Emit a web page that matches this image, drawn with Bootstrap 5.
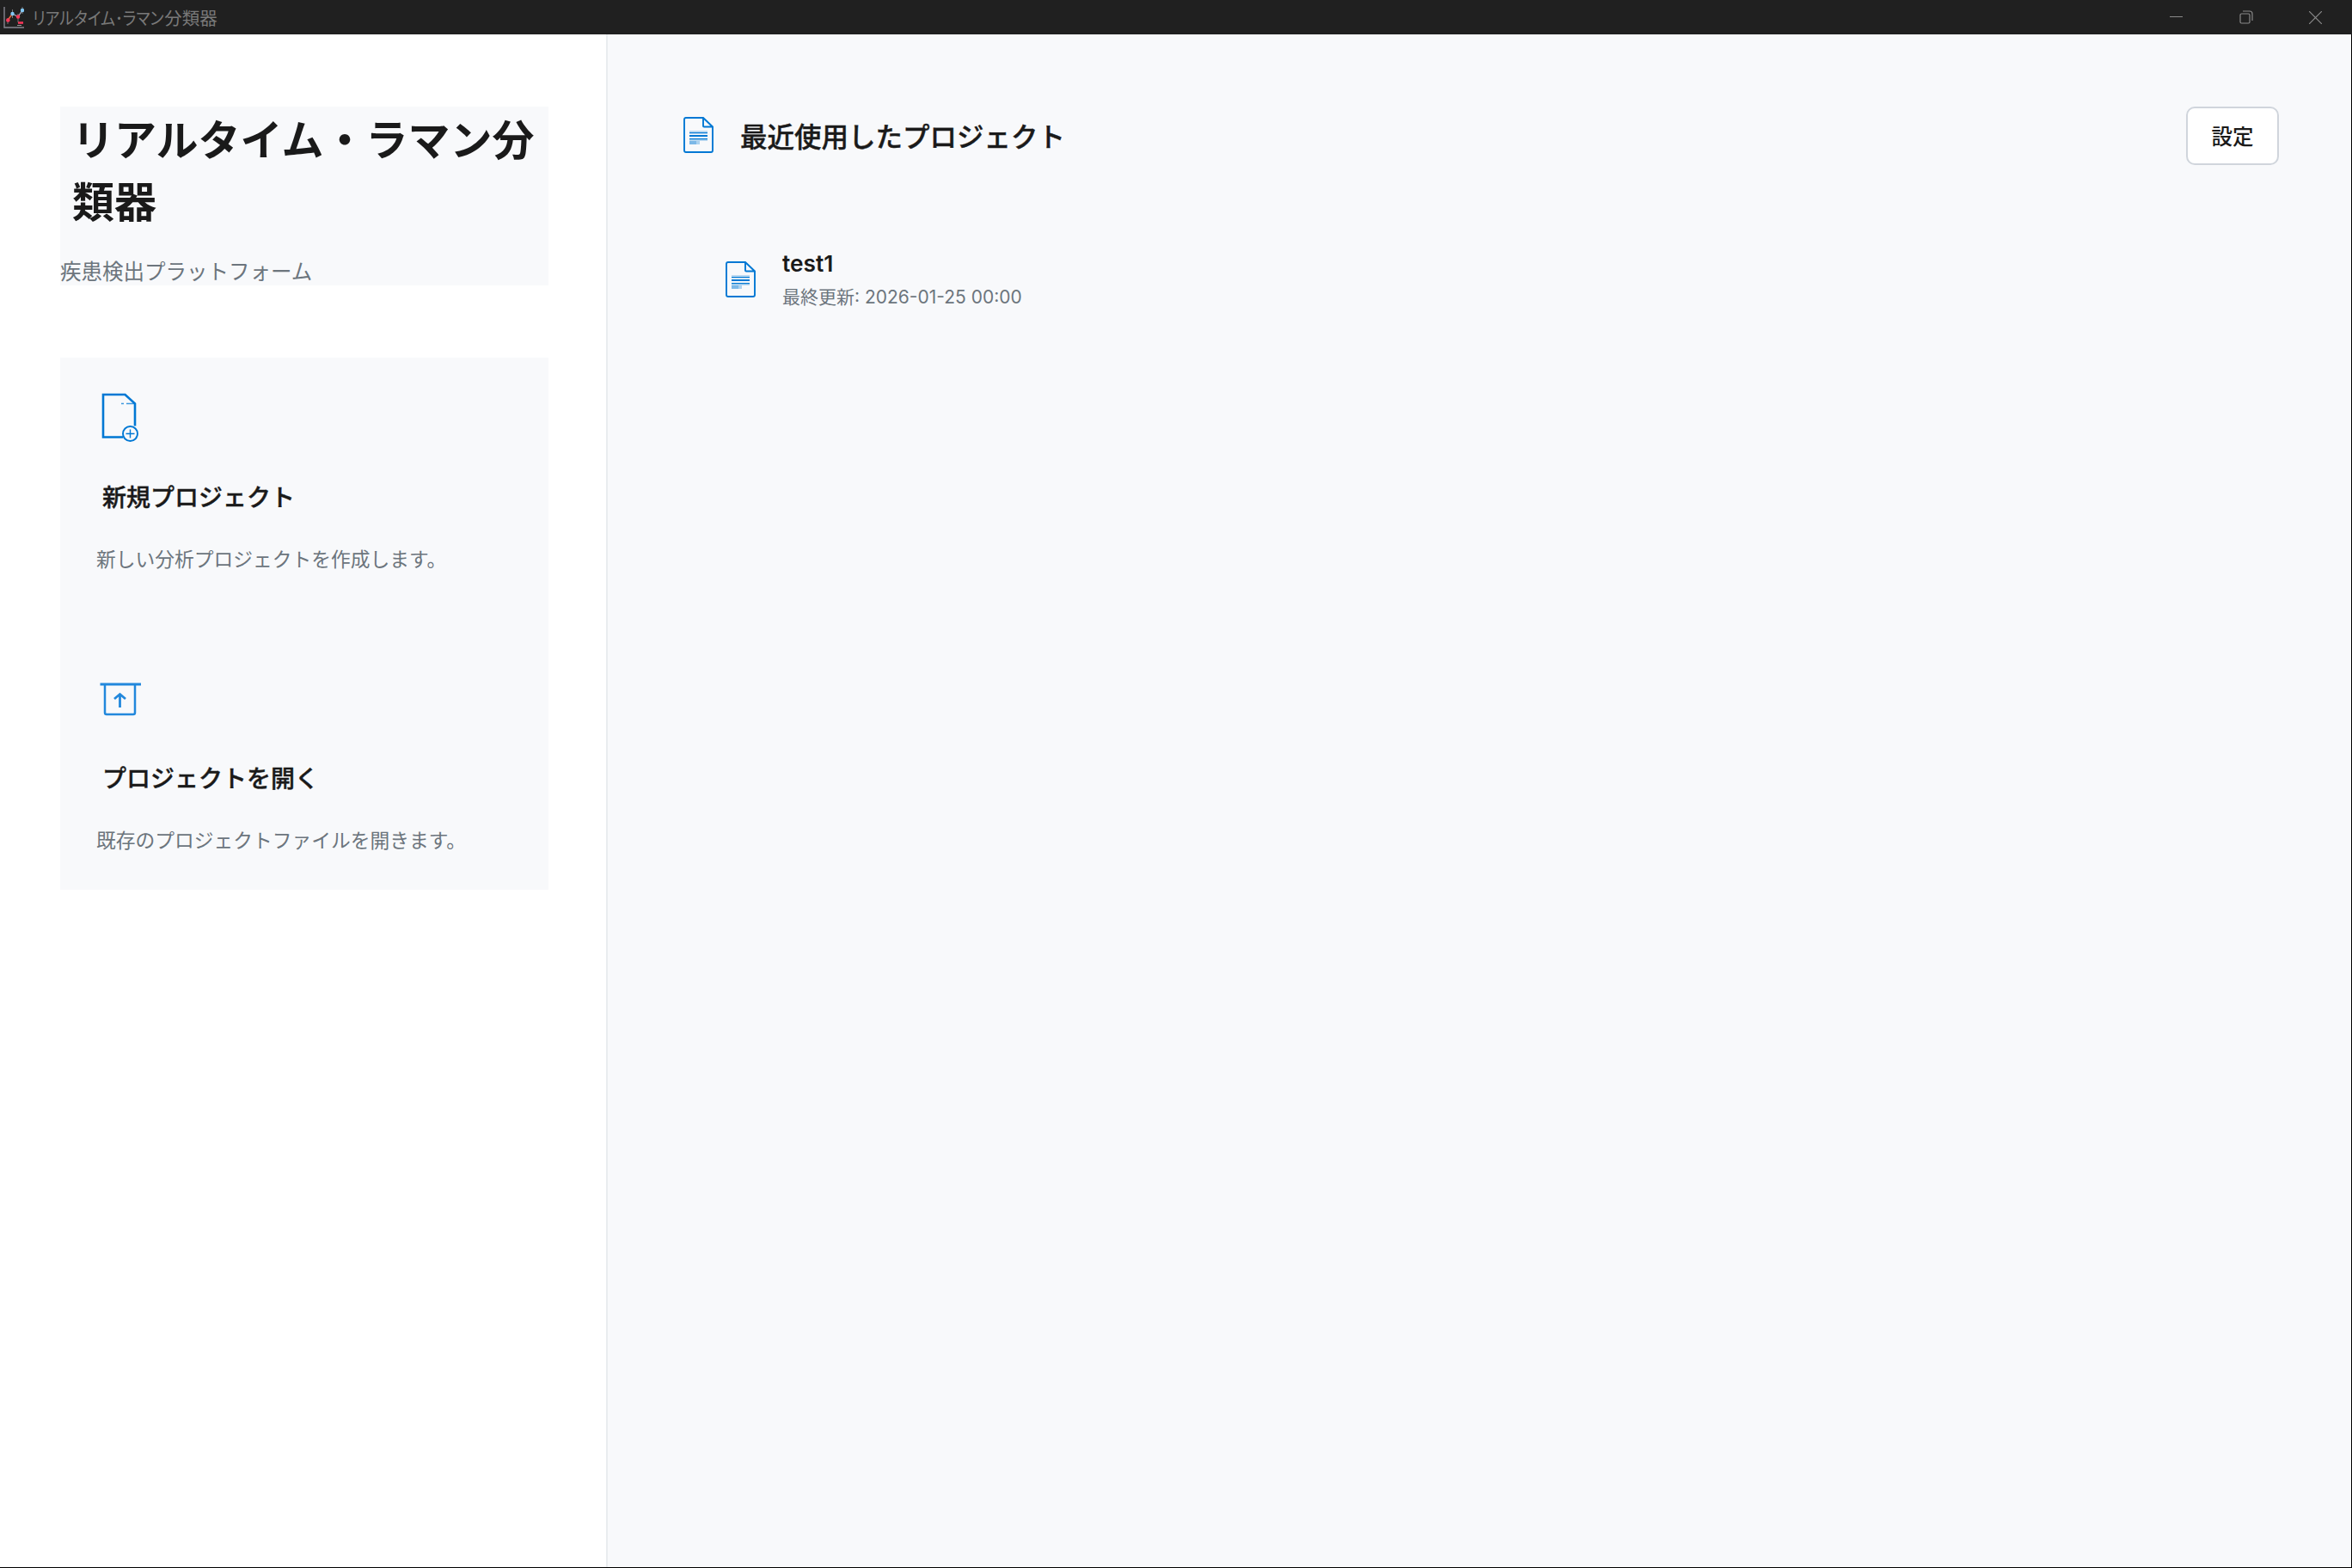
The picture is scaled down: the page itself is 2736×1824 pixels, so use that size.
<!DOCTYPE html>
<html lang="ja">
<head>
<meta charset="utf-8">
<title>リアルタイム・ラマン分類器</title>
<link href="https://cdn.jsdelivr.net/npm/bootstrap@5.3.0/dist/css/bootstrap.min.css" rel="stylesheet">
<style>
body{font-family:Inter,"Noto Sans CJK JP",sans-serif;color:#1a1a1a;background:#fff;height:1824px;line-height:1.5;overflow:hidden}
svg{display:block;flex:none}
.titlebar{height:40px;background:#202020;color:#797979;padding:0 2px 0 4px}
.app-name{font-family:"Noto Sans CJK JP",sans-serif;font-size:20.5px;line-height:39px;padding-top:1px;margin-left:10px}
.app-name .kana{font-feature-settings:"palt";transform:scaleX(.875);transform-origin:left;margin-right:-21px}
.win-btn{width:81px;height:40px}
.shell{border-right:1px solid #000;border-bottom:1px solid #000;min-height:0}
.side{width:707px;background:#fff;border-right:2px solid #e9ecef;padding:84px 67px 0 70px}
.panel{background:#f8f9fb;width:568px}
.brand{height:208px;margin-bottom:84px;padding-top:4px}
.brand h1{font-size:49px;line-height:72px;font-weight:700;padding-left:14px;margin:0}
.brand p{font-size:24.5px;line-height:36px;margin:26px 0 0;color:#6c757d}
.actions{height:619px;padding:40px 42px 0}
.action{height:327px}
.action h2{font-size:28px;line-height:42px;font-weight:500;-webkit-text-stroke:.4px #1a1a1a;margin:38px 0 34px;padding-left:7px}
.action p{font-size:22.75px;line-height:34px;margin:0;color:#6c757d}
.main-area{background:#f8f9fb;padding:84px 84px 0 88px}
.main-area h2{font-size:31.5px;line-height:48px;font-weight:500;-webkit-text-stroke:.4px #1a1a1a;margin:4px 0 0 31px}
.head-icon{margin-bottom:2px}
.set-btn{width:108px;height:68px;border:2px solid #d0d5dc;border-radius:10px;background:#fff;font-size:24.5px;font-weight:500;color:#1a1a1a;padding:2px 0 0}
.recent{padding:96px 0 0 49px}
.recent-icon{margin-top:16px}
.recent-text{margin-left:31px}
.recent-name{font-size:26.25px;line-height:38px;font-weight:600}
.recent-date{font-size:21px;line-height:38px;color:#6c757d;padding-top:1px}
</style>
<script src="https://cdn.jsdelivr.net/npm/bootstrap@5.3.0/dist/js/bootstrap.bundle.min.js"></script>
</head>
<body class="d-flex flex-column">
<svg width="0" height="0" class="position-absolute"><symbol id="doc" viewBox="0 0 35 42"><path d="M3 1H23L34 11.500V39Q34 41 32 41H3Q1 41 1 39V3Q1 1 3 1Z M23 1V10.500Q23 11.500 24 11.500H34" fill="none" stroke="#0078d4" stroke-width="1.900"/><g fill="#0078d4"><path d="M7 16h21v2H7zM7 26h21v2H7z" opacity=".25"/><path d="M7 18h21v1.200H7zM7 21h21v2H7zM7 25h21v1.200H7z"/><path d="M7 28h8v4H7z" opacity=".5"/><path d="M15 28h4v4h-4z" opacity=".3"/></g></symbol></svg>
<header class="titlebar d-flex align-items-center">
<svg width="24" height="26" viewBox="0 0 24 26"><path d="M1 1V25H24" fill="none" stroke="#85858f" stroke-width="1.400"/><path d="M5 14V21M10.500 4V14M17 9V19M22 1V9" stroke="#777" stroke-width="1"/><path d="M5 16.500L10.500 9" stroke="#e0693c" stroke-width="1.600"/><path d="M10.500 9L17 12.500L22 5" fill="none" stroke="#aab" stroke-width="1.300"/><circle cx="5.300" cy="16.500" r="2.300" fill="#f8375a"/><circle cx="10.500" cy="9" r="2.200" fill="#82c8f5"/><circle cx="17" cy="12.500" r="2.200" fill="#f8375a"/><circle cx="22" cy="5" r="2.200" fill="#82c8f5"/><path d="M17 19.500H23" stroke="#f8375a" stroke-width="2.600"/><path d="M16 22.500H21" stroke="#999" stroke-width="1"/></svg>
<div class="app-name d-flex me-auto"><span class="kana">リアルタイム･ラマン</span><span>分類器</span></div>
<div class="win-btn d-flex align-items-center justify-content-center"><svg width="15" height="15" viewBox="0 0 15 15"><path d="M0 6.500H15" stroke="#8a8a8a"/></svg></div>
<div class="win-btn d-flex align-items-center justify-content-center"><svg width="16" height="16" viewBox="0 0 16 16" fill="none" stroke="#8a8a8a" stroke-width="1.200"><rect x="1" y="4" width="11" height="11" rx="1.500"/><path d="M4 1H12Q15 1 15 4V12"/></svg></div>
<div class="win-btn d-flex align-items-center justify-content-center"><svg width="15" height="15" viewBox="0 0 15 15"><path d="M0 0L15 15M15 0L0 15" stroke="#8a8a8a" stroke-width="1.200"/></svg></div>
</header>
<div class="shell d-flex flex-grow-1">
<aside class="side flex-shrink-0">
<section class="panel brand"><h1>リアルタイム・ラマン分類器</h1><p>疾患検出プラットフォーム</p></section>
<section class="panel actions">
<div class="action">
<svg width="56" height="64" viewBox="112 456.500 56 64" fill="none" stroke="#0078d4" stroke-width="2"><path d="M143 509H120V459.500H145.500L157 470V496" stroke-width="2.600"/><path d="M141 470H144M147 470H157" stroke-width="1.600" opacity=".75"/><circle cx="151.500" cy="505" r="8.500" stroke-width="1.900"/><path d="M151.500 500V510M146.500 505H156.500" stroke-width="1.400"/></svg>
<h2>新規プロジェクト</h2><p>新しい分析プロジェクトを作成します。</p></div>
<div class="action">
<svg width="56" height="64" viewBox="112.500 783.500 56 64" fill="none" stroke="#2288dc" stroke-width="2.500"><path d="M117 796.500H164.500" stroke-width="2.800"/><path d="M122.500 797V829.500Q122.500 831.500 124.500 831.500H155.500Q157.500 831.500 157.500 829.500V797"/><path d="M140 823.500V808.500M133.500 813.500L140 808L146.500 813.500" stroke-width="2.800"/></svg>
<h2>プロジェクトを開く</h2><p>既存のプロジェクトファイルを開きます。</p></div>
</section>
</aside>
<main class="main-area flex-grow-1">
<div class="d-flex align-items-center"><svg class="head-icon" width="35" height="42"><use href="#doc"/></svg><h2>最近使用したプロジェクト</h2><button class="btn set-btn ms-auto">設定</button></div>
<div class="recent d-flex"><svg class="recent-icon" width="35" height="42"><use href="#doc"/></svg>
<div class="recent-text"><div class="recent-name">test1</div><div class="recent-date">最終更新: 2026-01-25 00:00</div></div></div>
</main>
</div>
</body>
</html>
